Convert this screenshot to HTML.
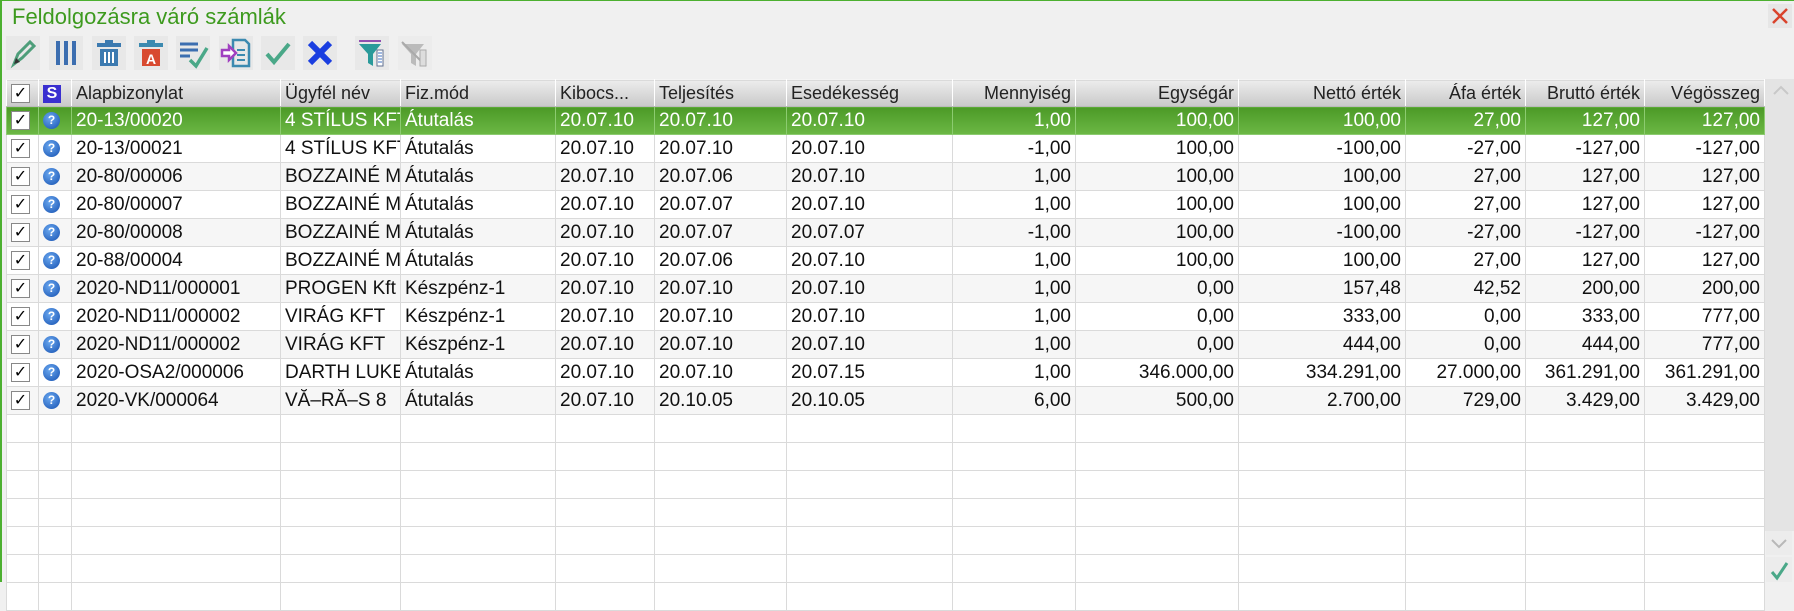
<!DOCTYPE html>
<html><head><meta charset="utf-8"><style>
body{margin:0;width:1794px;height:582px;overflow:hidden;background:#f0f0f0;font-family:"Liberation Sans",Arial,sans-serif;position:relative}
.lb{position:absolute;left:0;top:0;width:2px;height:582px;background:#4cb030}
.tb{position:absolute;left:0;top:0;width:1794px;height:1px;background:#4cb030}
.title{position:absolute;left:12px;top:4px;font-size:22px;color:#3d9a1e}
.close{position:absolute;left:1768px;top:4px;width:24px;height:24px;background:#e6e6e6}
.ic{position:absolute;top:36px;width:34px;height:34px;background:#e8e8e8}
table{position:absolute;left:6px;top:79px;width:1758px;border-collapse:collapse;table-layout:fixed;font-size:19px}
td{height:27px;border:1px solid #dadada;padding:0 4px;white-space:nowrap;overflow:hidden;text-overflow:clip;color:#111}
tr.h td{background:linear-gradient(#ececec,#c9c9c9);height:26px;border-color:#f4f4f4 #fff #bbb #fff;border-right:1px solid #fff;color:#222;font-size:18px}
tr.sel td{background:linear-gradient(#4c9a27,#6cb845);color:#fff;border-color:#8ccb70}
tr.w td{background:#fff}
tr.g td{background:#f6f6f6}
td.r{text-align:right}
.cb{display:inline-block;width:17px;height:17px;border:1px solid #888;background:#fff;font-size:16px;line-height:17px;text-align:center;color:#000;vertical-align:middle}
.q{display:inline-block;width:17px;height:17px;border-radius:50%;background:radial-gradient(circle at 40% 35%,#6aa8f0,#1550b0);color:#fff;font-size:12px;font-weight:bold;line-height:17px;text-align:center;vertical-align:middle}
.s{display:inline-block;width:18px;height:18px;background:#3a2fd0;color:#fff;font-weight:bold;font-size:16px;line-height:18px;text-align:center;vertical-align:middle}
.sb{position:absolute;left:1765px;top:79px;width:29px;height:452px;background:#e4e4e4}
</style></head><body>
<div class="lb"></div><div class="tb"></div>
<div class="title">Feldolgozásra váró számlák</div>
<div class="close"><svg width="24" height="24"><path d="M5 5L19 19M19 5L5 19" stroke="#d9432c" stroke-width="2.5"/></svg></div>

<div class="ic" style="left:6px"><svg width="34" height="34"><path d="M8 28L12 18L24 6L28 10L16 22Z" fill="none" stroke="#4e9e7a" stroke-width="3"/><path d="M8 28L10 22L14 26Z" fill="#333"/></svg></div>
<div class="ic" style="left:49px"><svg width="34" height="34"><path d="M9 5V29M17 5V29M25 5V29" stroke="#3c6eb0" stroke-width="4"/></svg></div>
<div class="ic" style="left:92px"><svg width="34" height="34"><rect x="5" y="7" width="24" height="4" fill="#3c7ab0"/><rect x="13" y="4" width="8" height="3" fill="#3c7ab0"/><rect x="8" y="13" width="18" height="17" fill="#3c7ab0"/><path d="M13 16V27M17 16V27M21 16V27" stroke="#fff" stroke-width="2"/></svg></div>
<div class="ic" style="left:134px"><svg width="34" height="34"><rect x="5" y="7" width="24" height="4" fill="#3c8ab0"/><rect x="13" y="4" width="8" height="3" fill="#3c8ab0"/><rect x="8" y="13" width="18" height="17" fill="#d84a30"/><text x="17" y="28" font-size="14" font-weight="bold" fill="#fff" text-anchor="middle" font-family="Liberation Sans">A</text></svg></div>
<div class="ic" style="left:176px"><svg width="34" height="34"><path d="M4 8H22M4 14H22M4 20H14" stroke="#3c6eb0" stroke-width="3"/><path d="M14 24L20 30L31 12" fill="none" stroke="#4aa888" stroke-width="3.5"/></svg></div>
<div class="ic" style="left:219px"><svg width="34" height="34"><path d="M14 4H26L30 8V30H14Z" fill="none" stroke="#3c8ab0" stroke-width="2.5"/><path d="M18 14H26M18 19H26M18 24H26" stroke="#3c8ab0" stroke-width="2"/><path d="M3 14H10V10L17 17L10 24V20H3Z" fill="#fff" stroke="#a040c0" stroke-width="2.5"/></svg></div>
<div class="ic" style="left:261px"><svg width="34" height="34"><path d="M6 18L13 26L28 8" fill="none" stroke="#4aa888" stroke-width="4"/></svg></div>
<div class="ic" style="left:303px"><svg width="34" height="34"><path d="M7 7L27 27M27 7L7 27" stroke="#1a3ee0" stroke-width="6"/></svg></div>
<div class="ic" style="left:355px"><svg width="34" height="34"><path d="M4 5H26" stroke="#9050b0" stroke-width="2"/><path d="M4 8H26L18 18V30L13 27V18Z" fill="#2a9a9a"/><rect x="22" y="14" width="6" height="16" fill="#fff" stroke="#607090"/><path d="M23 17H27M23 20H27M23 23H27M23 26H27" stroke="#4070c0"/></svg></div>
<div class="ic" style="left:398px;background:#ececec"><svg width="34" height="34"><path d="M4 8H26L18 18V30L13 27V18Z" fill="#bbb"/><path d="M4 6L28 30" stroke="#aaa" stroke-width="2"/><rect x="22" y="14" width="6" height="16" fill="#ddd" stroke="#aaa"/></svg></div>

<table>
<colgroup><col style="width:32px"><col style="width:33px"><col style="width:209px"><col style="width:120px"><col style="width:155px"><col style="width:99px"><col style="width:132px"><col style="width:166px"><col style="width:123px"><col style="width:163px"><col style="width:167px"><col style="width:120px"><col style="width:119px"><col style="width:120px"></colgroup>
<tr class="h"><td><span class="cb">✓</span></td><td><span class="s">S</span></td><td>Alapbizonylat</td><td>Ügyfél név</td><td>Fiz.mód</td><td>Kibocs...</td><td>Teljesítés</td><td>Esedékesség</td><td class="r">Mennyiség</td><td class="r">Egységár</td><td class="r">Nettó érték</td><td class="r">Áfa érték</td><td class="r">Bruttó érték</td><td class="r">Végösszeg</td></tr>
<tr class="sel"><td><span class="cb">✓</span></td><td><span class="q">?</span></td><td>20-13/00020</td><td>4 STÍLUS KFT</td><td>Átutalás</td><td>20.07.10</td><td>20.07.10</td><td>20.07.10</td><td class="r">1,00</td><td class="r">100,00</td><td class="r">100,00</td><td class="r">27,00</td><td class="r">127,00</td><td class="r">127,00</td></tr>
<tr class="w"><td><span class="cb">✓</span></td><td><span class="q">?</span></td><td>20-13/00021</td><td>4 STÍLUS KFT</td><td>Átutalás</td><td>20.07.10</td><td>20.07.10</td><td>20.07.10</td><td class="r">-1,00</td><td class="r">100,00</td><td class="r">-100,00</td><td class="r">-27,00</td><td class="r">-127,00</td><td class="r">-127,00</td></tr>
<tr class="g"><td><span class="cb">✓</span></td><td><span class="q">?</span></td><td>20-80/00006</td><td>BOZZAINÉ MÁ</td><td>Átutalás</td><td>20.07.10</td><td>20.07.06</td><td>20.07.10</td><td class="r">1,00</td><td class="r">100,00</td><td class="r">100,00</td><td class="r">27,00</td><td class="r">127,00</td><td class="r">127,00</td></tr>
<tr class="w"><td><span class="cb">✓</span></td><td><span class="q">?</span></td><td>20-80/00007</td><td>BOZZAINÉ MÁ</td><td>Átutalás</td><td>20.07.10</td><td>20.07.07</td><td>20.07.10</td><td class="r">1,00</td><td class="r">100,00</td><td class="r">100,00</td><td class="r">27,00</td><td class="r">127,00</td><td class="r">127,00</td></tr>
<tr class="g"><td><span class="cb">✓</span></td><td><span class="q">?</span></td><td>20-80/00008</td><td>BOZZAINÉ MÁ</td><td>Átutalás</td><td>20.07.10</td><td>20.07.07</td><td>20.07.07</td><td class="r">-1,00</td><td class="r">100,00</td><td class="r">-100,00</td><td class="r">-27,00</td><td class="r">-127,00</td><td class="r">-127,00</td></tr>
<tr class="w"><td><span class="cb">✓</span></td><td><span class="q">?</span></td><td>20-88/00004</td><td>BOZZAINÉ MÁ</td><td>Átutalás</td><td>20.07.10</td><td>20.07.06</td><td>20.07.10</td><td class="r">1,00</td><td class="r">100,00</td><td class="r">100,00</td><td class="r">27,00</td><td class="r">127,00</td><td class="r">127,00</td></tr>
<tr class="g"><td><span class="cb">✓</span></td><td><span class="q">?</span></td><td>2020-ND11/000001</td><td>PROGEN Kft</td><td>Készpénz-1</td><td>20.07.10</td><td>20.07.10</td><td>20.07.10</td><td class="r">1,00</td><td class="r">0,00</td><td class="r">157,48</td><td class="r">42,52</td><td class="r">200,00</td><td class="r">200,00</td></tr>
<tr class="w"><td><span class="cb">✓</span></td><td><span class="q">?</span></td><td>2020-ND11/000002</td><td>VIRÁG KFT</td><td>Készpénz-1</td><td>20.07.10</td><td>20.07.10</td><td>20.07.10</td><td class="r">1,00</td><td class="r">0,00</td><td class="r">333,00</td><td class="r">0,00</td><td class="r">333,00</td><td class="r">777,00</td></tr>
<tr class="g"><td><span class="cb">✓</span></td><td><span class="q">?</span></td><td>2020-ND11/000002</td><td>VIRÁG KFT</td><td>Készpénz-1</td><td>20.07.10</td><td>20.07.10</td><td>20.07.10</td><td class="r">1,00</td><td class="r">0,00</td><td class="r">444,00</td><td class="r">0,00</td><td class="r">444,00</td><td class="r">777,00</td></tr>
<tr class="w"><td><span class="cb">✓</span></td><td><span class="q">?</span></td><td>2020-OSA2/000006</td><td>DARTH LUKE</td><td>Átutalás</td><td>20.07.10</td><td>20.07.10</td><td>20.07.15</td><td class="r">1,00</td><td class="r">346.000,00</td><td class="r">334.291,00</td><td class="r">27.000,00</td><td class="r">361.291,00</td><td class="r">361.291,00</td></tr>
<tr class="g"><td><span class="cb">✓</span></td><td><span class="q">?</span></td><td>2020-VK/000064</td><td>VĂ–RĂ–S 8</td><td>Átutalás</td><td>20.07.10</td><td>20.10.05</td><td>20.10.05</td><td class="r">6,00</td><td class="r">500,00</td><td class="r">2.700,00</td><td class="r">729,00</td><td class="r">3.429,00</td><td class="r">3.429,00</td></tr>
<tr class="w"><td></td><td></td><td></td><td></td><td></td><td></td><td></td><td></td><td></td><td></td><td></td><td></td><td></td><td></td></tr>
<tr class="w"><td></td><td></td><td></td><td></td><td></td><td></td><td></td><td></td><td></td><td></td><td></td><td></td><td></td><td></td></tr>
<tr class="w"><td></td><td></td><td></td><td></td><td></td><td></td><td></td><td></td><td></td><td></td><td></td><td></td><td></td><td></td></tr>
<tr class="w"><td></td><td></td><td></td><td></td><td></td><td></td><td></td><td></td><td></td><td></td><td></td><td></td><td></td><td></td></tr>
<tr class="w"><td></td><td></td><td></td><td></td><td></td><td></td><td></td><td></td><td></td><td></td><td></td><td></td><td></td><td></td></tr>
<tr class="w"><td></td><td></td><td></td><td></td><td></td><td></td><td></td><td></td><td></td><td></td><td></td><td></td><td></td><td></td></tr>
<tr class="w"><td></td><td></td><td></td><td></td><td></td><td></td><td></td><td></td><td></td><td></td><td></td><td></td><td></td><td></td></tr>
</table>
<div class="sb"></div>
<div style="position:absolute;left:1769px;top:80px"><svg width="24" height="20"><path d="M5 14L12 7L19 14" fill="none" stroke="#c8c8c8" stroke-width="2"/></svg></div>
<div style="position:absolute;left:1766px;top:531px;width:26px;height:24px;background:#ececec"><svg width="26" height="24"><path d="M6 9L13 16L20 9" fill="none" stroke="#b8b8b8" stroke-width="2"/></svg></div>
<div style="position:absolute;left:1766px;top:557px;width:26px;height:25px;background:#ececec"><svg width="26" height="25"><path d="M6 15L11 21L21 6" fill="none" stroke="#4aa888" stroke-width="3"/></svg></div>
</body></html>
